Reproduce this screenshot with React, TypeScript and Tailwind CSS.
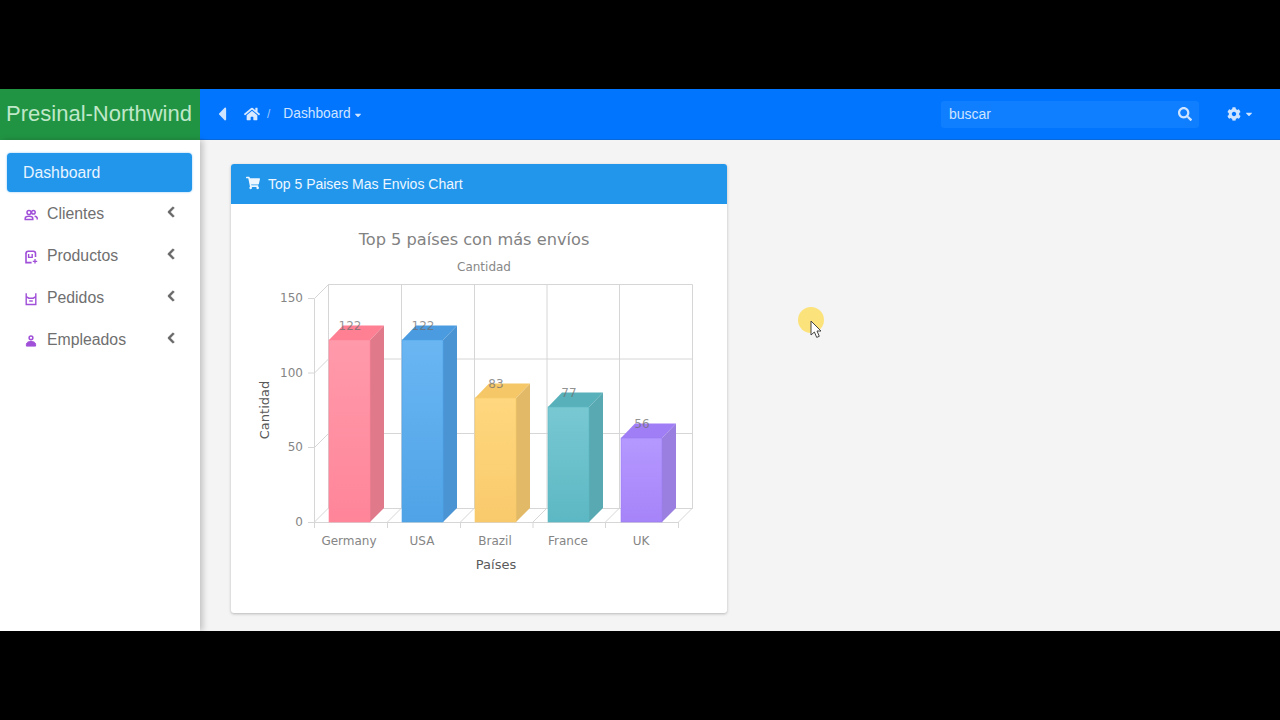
import React from 'react';
import { FaCaretDown, FaCaretLeft, FaChevronLeft, FaCog, FaHome, FaSearch, FaShoppingCart } from 'react-icons/fa';

const MENU = [
  { label: 'Clientes', icon: <ClientesIcon /> },
  { label: 'Productos', icon: <ProductosIcon /> },
  { label: 'Pedidos', icon: <PedidosIcon /> },
  { label: 'Empleados', icon: <EmpleadosIcon /> },
];

function ClientesIcon() {
  return (
    <svg width="14" height="14" viewBox="0 0 14 14" fill="none" stroke="#a04fd8" strokeWidth="1.5">
      <circle cx="5" cy="4.4" r="2" />
      <circle cx="9.4" cy="4.2" r="1.8" />
      <path d="M1.2 11.6v-1.2c0-1.4 1.7-2.1 3.8-2.1s3.8.7 3.8 2.1v1.2z" />
      <path d="M10.6 8.2c1.4.2 2.6.9 2.6 2v1.4" />
    </svg>
  );
}

function ProductosIcon() {
  return (
    <svg width="14" height="14" viewBox="0 0 14 14" fill="none" stroke="#a04fd8">
      <path d="M2 3.5C2 2 3 1.2 4.2 1.2h5.2c1.2 0 2.1.8 2.1 2.3v3.6" strokeWidth="1.6" />
      <path d="M2 3v9.6h5.6" strokeWidth="1.6" />
      <path d="M4.6 4v3.4h3.6V4" strokeWidth="1.4" />
      <path d="M11 9v4.6M8.8 11.3h4.4" strokeWidth="1.3" />
    </svg>
  );
}

function PedidosIcon() {
  return (
    <svg width="14" height="14" viewBox="0 0 14 14" fill="none" stroke="#a04fd8" strokeWidth="1.4">
      <path d="M2.2 1.2v11.3h9.6V1.2" />
      <path d="M2.2 4.6l2.6 1.6h4.4l2.6-1.6" />
      <path d="M5.2 9h3.6" />
    </svg>
  );
}

function EmpleadosIcon() {
  return (
    <svg width="14" height="14" viewBox="0 0 14 14" fill="none" stroke="#a04fd8">
      <circle cx="7" cy="3.8" r="1.9" strokeWidth="1.5" />
      <path d="M2.4 10.4c0-2 2.1-3 4.6-3s4.6 1 4.6 3v1.7H2.4z" fill="#a04fd8" strokeWidth="1" />
    </svg>
  );
}

const BARS = [
  { label: 'Germany', value: 122, x: 329, top: 340, front: ['#ff9aab', '#ff8599'], side: '#e07a8b', cap: '#ff7f93', line: '#ff8599' },
  { label: 'USA', value: 122, x: 402, top: 340, front: ['#6ab6f3', '#4fa3e6'], side: '#4a94d4', cap: '#4a9be0', line: '#4fa3e6' },
  { label: 'Brazil', value: 83, x: 475, top: 398, front: ['#ffd77e', '#f9ca6c'], side: '#e2b966', cap: '#f6c766', line: '#f9ca6c' },
  { label: 'France', value: 77, x: 548, top: 407, front: ['#78c8d2', '#5cb8c4'], side: '#58a9b2', cap: '#58b0ba', line: '#5cb8c4' },
  { label: 'UK', value: 56, x: 621, top: 438, front: ['#b598ff', '#a684f9'], side: '#9a7fe0', cap: '#a07ef5', line: '#9a7cf0' },
];

function Chart() {
  const gridX = [387, 460, 532.5, 605, 678];
  const ticks = [
    { label: '150', y: 298 },
    { label: '100', y: 372.5 },
    { label: '50', y: 447 },
    { label: '0', y: 522 },
  ];
  return (
    <svg width="496" height="409" viewBox="231 204 496 409" fontFamily="'DejaVu Sans', sans-serif">
      <defs>
        {BARS.map((b, i) => (
          <linearGradient key={b.label} id={`bar-${i}`} x1="0" y1="0" x2="0" y2="1">
            <stop offset="0" stopColor={b.front[0]} />
            <stop offset="1" stopColor={b.front[1]} />
          </linearGradient>
        ))}
      </defs>
      <text x="474" y="245" textAnchor="middle" fontSize="16.2" fill="#828282">Top 5 países con más envíos</text>
      <text x="484" y="271" textAnchor="middle" fontSize="12" fill="#888">Cantidad</text>

      {/* back wall */}
      <g fill="none" stroke="#d6d6d6" strokeWidth="1">
        <path d="M328 284.5H692.5V508.5H328.5V284" />
        <path d="M328 359H692.5M328 433.5H692.5" />
        {gridX.slice(0, 4).map((x) => <path key={x} d={`M${x + 14.5} 284V508`} />)}
        {/* floor and left side */}
        <path d="M314.5 522V298.5L328.5 284.5M314.5 373L328.5 359M314.5 447.5L328.5 433.5M314.5 522L328.5 508" />
        {gridX.map((x) => <path key={x} d={`M${x + 0.5} 522L${x + 14.5} 508`} />)}
        <path d="M314 522.5H678.5" />
        {[314.5, ...gridX.map((x) => x + 0.5)].map((x) => <path key={x} d={`M${x} 522V528`} />)}
        {ticks.map((t) => <path key={t.y} d={`M308 ${t.y + 0.5}H314`} />)}
      </g>

      {ticks.map((t) => (
        <text key={t.label} x="303" y={t.y + 4} textAnchor="end" fontSize="12" fill="#858585">{t.label}</text>
      ))}

      {BARS.map((b, i) => (
        <g key={b.label}>
          <path d={`M${b.x + 41} ${b.top}l14 -14.5V508l-14 14z`} fill={b.side} />
          <path d={`M${b.x} ${b.top}l14 -14.5h41l-14 14.5z`} fill={b.cap} />
          <rect x={b.x} y={b.top} width="41" height={522 - b.top} fill={`url(#bar-${i})`} stroke={b.line} strokeWidth="0.6" />
          <text x={b.x + 21} y={b.top - 10} textAnchor="middle" fontSize="12" fill="#6f6f6f" fillOpacity="0.75">{b.value}</text>
          <text x={b.x + 20} y="545" textAnchor="middle" fontSize="12" fill="#858585">{b.label}</text>
        </g>
      ))}

      <text x="496" y="569" textAnchor="middle" fontSize="13" fill="#5a5a5a">Países</text>
      <text transform="translate(269 410) rotate(-90)" textAnchor="middle" fontSize="13" fill="#5a5a5a">Cantidad</text>
    </svg>
  );
}

export default function App() {
  return (
    <div className="w-[1280px] h-[720px] bg-black py-[89px] overflow-hidden font-['Liberation_Sans',Arial,sans-serif]">
      <div className="h-[542px] flex flex-col bg-[#f4f4f4]">
        {/* Header */}
        <header className="h-[51px] flex shrink-0 bg-[#0275ff] border-b border-[#0a68d8]">
          <div className="w-[200px] h-[51px] shrink-0 bg-[#219443] text-[#bfe8c9] text-[22px] flex items-center justify-center whitespace-nowrap pr-[2px] pb-[2px]">
            Presinal-Northwind
          </div>
          <div className="flex-1 flex items-center text-[#cfe4ff] text-[13.75px]">
            <FaCaretLeft className="ml-[11px] text-[#cfe4ff]" size={22} />
            <FaHome className="ml-[11px] text-[#d8e9ff]" size={16} />
            <span className="ml-[7px] text-[#9cc8ff] text-[12px]">/</span>
            <span className="ml-[13px] mt-[1px]">Dashboard</span>
            <FaCaretDown className="ml-[2px] mt-[1px]" size={10} />
            <div className="ml-auto w-[258px] h-[27px] rounded-[3px] bg-[#0f7fff] flex items-center justify-between pl-[8px] pr-[7px] text-[#cfe4ff] text-[14px]">
              <span>buscar</span>
              <FaSearch size={14} />
            </div>
            <div className="w-[81px] flex items-center pl-[28px]">
              <FaCog size={14} />
              <FaCaretDown className="ml-[3px]" size={10} />
            </div>
          </div>
        </header>

        <div className="flex flex-1 min-h-0">
          {/* Sidebar */}
          <aside className="w-[200px] shrink-0 bg-white shadow-[3px_0_6px_rgba(0,0,0,0.2)] z-10 pt-[13px] pl-[7px] pr-[8px]">
            <div className="h-[39px] rounded-[4px] bg-[#2196eb] text-[#e8f4ff] text-[15.8px] flex items-center pl-[16px] pt-[1px] shadow-[0_0_2px_rgba(33,150,235,0.6)]">
              Dashboard
            </div>
            <ul className="mt-[1px]">
              {MENU.map((item) => (
                <li key={item.label} className="h-[42px] flex items-center pl-[17px] pr-[15px] text-[#6f6f6f] text-[15.8px]">
                  <span className="w-[23px] mt-[1px]">{item.icon}</span>
                  <span>{item.label}</span>
                  <FaChevronLeft className="ml-auto mb-[5px] text-[#666]" size={12} stroke="currentColor" strokeWidth={30} />
                </li>
              ))}
            </ul>
          </aside>

          {/* Content */}
          <main className="relative flex-1 pt-[24px] pl-[31px]">
            <section className="w-[496px] h-[449px] bg-white rounded-[3px] shadow-[0_1px_3px_rgba(0,0,0,0.25)] overflow-hidden">
              <div className="h-[40px] bg-[#2196eb] flex items-center pl-[15px] text-[#eef7ff] text-[14px]">
                <FaShoppingCart size={14} className="mb-[3px]" />
                <span className="ml-[8px]">Top 5 Paises Mas Envios Chart</span>
              </div>
              <Chart />
            </section>

            {/* Cursor highlight from the recording */}
            <div className="absolute left-[598px] top-[167px] w-[26px] h-[26px] rounded-full bg-[#fce27a]" />
            <svg className="absolute left-[610px] top-[180px]" width="13" height="20" viewBox="0 0 13 20">
              <path d="M1 1v14l3.4-3 2.3 5.4 2.6-1.1-2.3-5.3H11z" fill="#fff" stroke="#444" strokeWidth="1" />
            </svg>
          </main>
        </div>
      </div>
    </div>
  );
}
